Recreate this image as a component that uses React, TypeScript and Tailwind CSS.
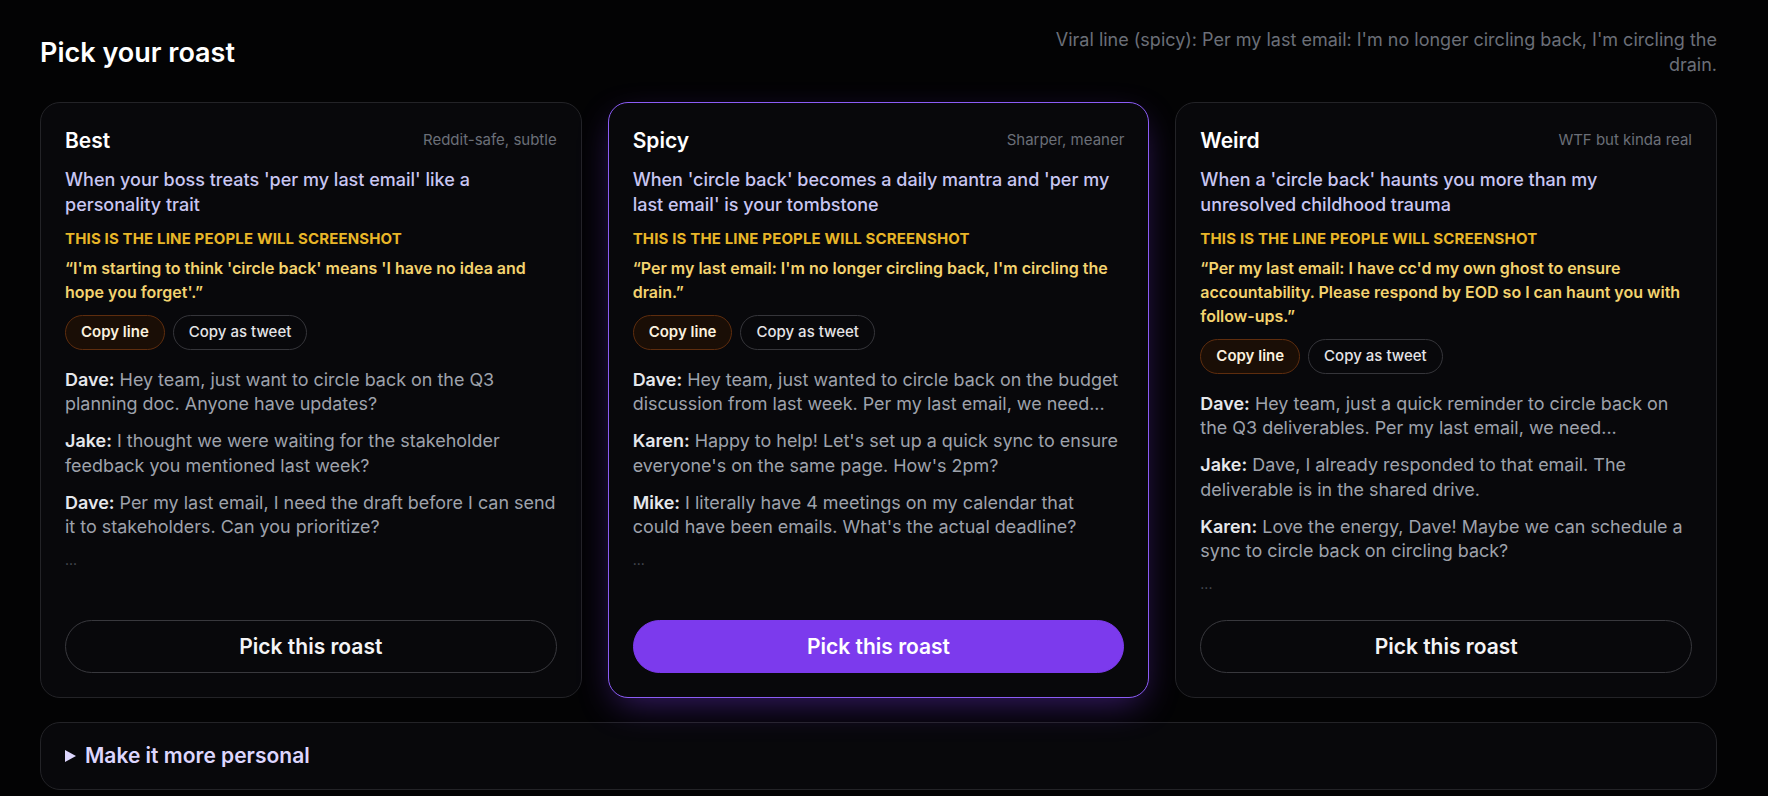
import React from "react";

type Line = { who: string; text: string };
type Roast = {
  title: string;
  sub: string;
  tagline: string;
  quote: string;
  lines: Line[];
  selected?: boolean;
};

const roasts: Roast[] = [
  {
    title: "Best",
    sub: "Reddit-safe, subtle",
    tagline: "When your boss treats 'per my last email' like a personality trait",
    quote: "\u201CI'm starting to think 'circle back' means 'I have no idea and hope you forget'.\u201D",
    lines: [
      { who: "Dave", text: "Hey team, just want to circle back on the Q3 planning doc. Anyone have updates?" },
      { who: "Jake", text: "I thought we were waiting for the stakeholder feedback you mentioned last week?" },
      { who: "Dave", text: "Per my last email, I need the draft before I can send it to stakeholders. Can you prioritize?" },
    ],
  },
  {
    title: "Spicy",
    sub: "Sharper, meaner",
    tagline: "When 'circle back' becomes a daily mantra and 'per my last email' is your tombstone",
    quote: "\u201CPer my last email: I'm no longer circling back, I'm circling the drain.\u201D",
    selected: true,
    lines: [
      { who: "Dave", text: "Hey team, just wanted to circle back on the budget discussion from last week. Per my last email, we need..." },
      { who: "Karen", text: "Happy to help! Let's set up a quick sync to ensure everyone's on the same page. How's 2pm?" },
      { who: "Mike", text: "I literally have 4 meetings on my calendar that could have been emails. What's the actual deadline?" },
    ],
  },
  {
    title: "Weird",
    sub: "WTF but kinda real",
    tagline: "When a 'circle back' haunts you more than my unresolved childhood trauma",
    quote: "\u201CPer my last email: I have cc'd my own ghost to ensure accountability. Please respond by EOD so I can haunt you with follow-ups.\u201D",
    lines: [
      { who: "Dave", text: "Hey team, just a quick reminder to circle back on the Q3 deliverables. Per my last email, we need..." },
      { who: "Jake", text: "Dave, I already responded to that email. The deliverable is in the shared drive." },
      { who: "Karen", text: "Love the energy, Dave! Maybe we can schedule a sync to circle back on circling back?" },
    ],
  },
];

function Card({ r }: { r: Roast }) {
  return (
    <div
      className={
        r.selected
          ? "flex flex-col rounded-[20px] border border-[#8b5cf6] bg-[#08080b] p-6 shadow-[0_12px_36px_-8px_rgba(124,58,237,0.45)]"
          : "flex flex-col rounded-[20px] border border-[#232327] bg-[#08080b] p-6"
      }
    >
      <div className="flex items-center justify-between">
        <div className="text-[21px] font-semibold leading-7 text-white">{r.title}</div>
        <div className="text-[15px] text-[#6b6f78]">{r.sub}</div>
      </div>
      <div className="mt-3 text-lg font-medium leading-[25px] text-[#c8c6f2]">{r.tagline}</div>
      <div className="mt-3 text-[15px] font-bold leading-5 tracking-[0.01em] text-[#e8b628]">
        THIS IS THE LINE PEOPLE WILL SCREENSHOT
      </div>
      <div className="mt-[7px] text-base font-semibold leading-6 text-[#f3d36f]">{r.quote}</div>
      <div className="mt-[11px] flex gap-2">
        <button className="h-[35px] rounded-full border border-[#5e2d0e] bg-[#1a0e06] px-[15px] text-[15px] font-semibold text-[#fbf1df]">
          Copy line
        </button>
        <button className="h-[35px] rounded-full border border-[#35353a] bg-transparent px-[15px] text-[15px] font-medium text-[#e4e4e7]">
          Copy as tweet
        </button>
      </div>
      <div className="mt-[18px] flex flex-col gap-3">
        {r.lines.map((l, i) => (
          <p key={i} className="text-[17.95px] leading-[24.75px] text-[#9ea2ab]">
            <span className="font-semibold text-[#e5e7eb]">{l.who}:</span> {l.text}
          </p>
        ))}
        <p className="text-sm leading-[15px] text-[#4b4f58]">...</p>
      </div>
      <div className="mt-auto pt-[29px]">
        <button
          className={
            r.selected
              ? "w-full rounded-full border border-[#7c3aed] bg-[#7c3aed] py-3 text-[21px] font-semibold leading-[27px] text-white"
              : "w-full rounded-full border border-[#38383d] bg-transparent py-3 text-[21px] font-semibold leading-[27px] text-[#f4f4f5]"
          }
        >
          Pick this roast
        </button>
      </div>
    </div>
  );
}

export default function App() {
  return (
    <div
      className="min-h-screen bg-[#030304] pl-10 pr-[51px] pt-[28px]"
      style={{ fontFamily: "Inter, 'Noto Sans', sans-serif" }}
    >
      <div className="flex items-center justify-between">
        <h1 className="text-[27px] font-semibold leading-8 text-white">Pick your roast</h1>
        <p className="max-w-2xl text-right text-lg leading-snug text-[#6b6f78]">
          Viral line (spicy): Per my last email: I'm no longer circling back, I'm circling the drain.
        </p>
      </div>
      <div className="mt-6 grid grid-cols-3 gap-[26px]">
        {roasts.map((r) => (
          <Card key={r.title} r={r} />
        ))}
      </div>
      <div className="mt-6 flex items-center gap-[9px] rounded-[20px] border border-[#232327] bg-[#08080b] px-6 py-[19px]">
        <svg width="11" height="12" viewBox="0 0 11 12" className="shrink-0">
          <path d="M0 0 L11 6 L0 12 Z" fill="#ddd6fe" />
        </svg>
        <span className="text-[21px] font-semibold leading-7 text-[#ddd6fe]">Make it more personal</span>
      </div>
      <div className="h-10" />
    </div>
  );
}
